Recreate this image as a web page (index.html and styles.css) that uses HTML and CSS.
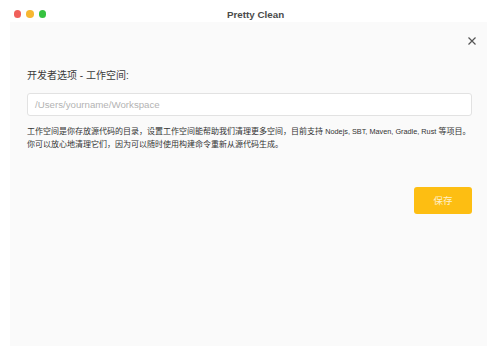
FILE: index.html
```html
<!DOCTYPE html>
<html lang="zh-CN">
<head>
<meta charset="utf-8">
<title>Pretty Clean</title>
<link rel="stylesheet" href="styles.css">
</head>
<body>
<div class="titlebar">
  <div class="lights">
    <span class="light red"></span>
    <span class="light yellow"></span>
    <span class="light green"></span>
  </div>
  <div class="title">Pretty Clean</div>
</div>
<div class="panel">
  <div class="close-row">
    <svg class="close" width="8" height="8" viewBox="0 0 8 8"><path d="M0.5 0.5 L7.5 7.5 M7.5 0.5 L0.5 7.5" stroke="#555" stroke-width="1.2" fill="none"/></svg>
  </div>
  <div class="heading">开发者选项 - 工作空间:</div>
  <div class="input">/Users/yourname/Workspace</div>
  <p class="desc">工作空间是你存放源代码的目录，设置工作空间能帮助我们清理更多空间，目前支持 <span class="latin">Nodejs, SBT, Maven, Gradle, Rust</span> 等项目。<br>你可以放心地清理它们，因为可以随时使用构建命令重新从源代码生成。</p>
  <div class="actions">
    <div class="save">保存</div>
  </div>
</div>
</body>
</html>
```
FILE: styles.css
```css
html, body {
  margin: 0;
  padding: 0;
  background: #ffffff;
  font-family: "Liberation Sans", "Noto Sans CJK SC", sans-serif;
  color: #333;
}
.titlebar {
  display: flex;
  align-items: center;
  height: 22px;
  padding-left: 13.5px;
  padding-top: 6px;
  box-sizing: border-box;
}
.lights {
  display: flex;
  gap: 5px;
}
.light {
  width: 7.5px;
  height: 7.5px;
  border-radius: 50%;
}
.red { background: #f0605a; }
.yellow { background: #f7b731; }
.green { background: #36c240; }
.title {
  margin-left: 181px;
  font-weight: bold;
  font-size: 9.8px;
  color: #4a4a4a;
}
.panel {
  margin-left: 10px;
  background: #fafafa;
  height: 324px;
  padding: 15px 15px 0 17px;
  box-sizing: border-box;
}
.close-row {
  display: flex;
  justify-content: flex-end;
  margin-right: -4px;
  height: 8px;
}
.close { display: block; }
.heading {
  margin-top: 24px;
  font-size: 10px;
  line-height: 14px;
  color: #3a3a3a;
}
.input {
  margin-top: 10px;
  height: 23px;
  box-sizing: border-box;
  border: 1px solid #e2e2e2;
  border-radius: 3px;
  background: #fff;
  padding-left: 7px;
  display: flex;
  align-items: center;
  color: #b3b3b3;
  font-size: 9.7px;
}
.desc {
  margin: 8.5px 0 0;
  font-size: 8px;
  line-height: 13px;
  color: #333;
  white-space: nowrap;
}
.latin { font-size: 7.3px; }
.actions {
  display: flex;
  justify-content: flex-end;
  margin-top: 36px;
}
.save {
  width: 58px;
  height: 27px;
  border-radius: 3px;
  background: #fdbe12;
  color: rgba(255, 255, 255, 0.8);
  font-size: 9.5px;
  display: flex;
  align-items: center;
  justify-content: center;
}
```
